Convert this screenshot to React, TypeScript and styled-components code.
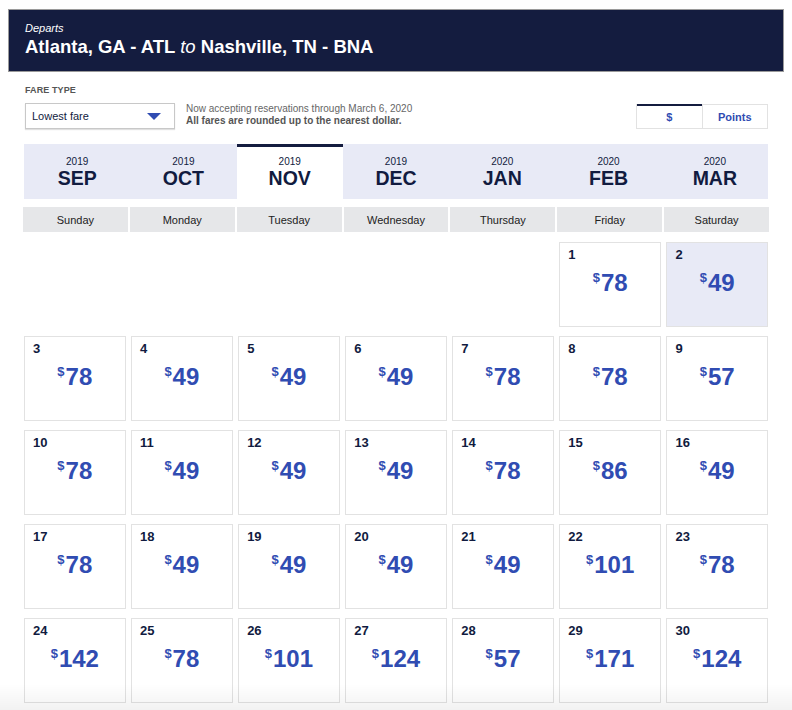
import React from "react";
import styled, { createGlobalStyle } from "styled-components";

const GlobalStyle = createGlobalStyle`
    body {
        margin: 8px;
        background: #fff;
        font-family: "Liberation Sans", Arial, sans-serif;
        color: #111b40;
    }
    body::after {
        content: "";
        position: fixed;
        left: 0;
        right: 0;
        bottom: 0;
        height: 26px;
        background: linear-gradient(rgba(0, 0, 0, 0), rgba(0, 0, 0, 0.05));
        pointer-events: none;
    }
`;

const Page = styled.div`
    width: 776px;
`;

const Header = styled.div`
    background: #141c3f;
    border: 1px solid #9a9a9a;
    height: 63px;
    padding: 12px 16px 0;
    box-sizing: border-box;
    color: #fff;
    margin-top: 1px;
`;

const Departs = styled.div`
    font-size: 11px;
    font-style: italic;
    line-height: 13px;
`;

const Route = styled.div`
    font-size: 18.5px;
    font-weight: 700;
    line-height: 23px;
    em {
        font-weight: 400;
    }
`;

const Body = styled.div`
    padding: 0 16px;
`;

const Controls = styled.div`
    display: flex;
    align-items: flex-end;
    padding-top: 14px;
    height: 57px;
    box-sizing: border-box;
`;

const FareBlock = styled.div`
    display: flex;
    flex-direction: column;
    padding-left: 1px;
`;

const FareLabel = styled.div`
    font-size: 9px;
    font-weight: 700;
    color: #555;
    letter-spacing: 0.1px;
    line-height: 11px;
    margin-bottom: 7px;
`;

const Select = styled.div`
    width: 150px;
    height: 26px;
    box-sizing: border-box;
    border: 1px solid #c8c8c8;
    box-shadow: 0 1px 1px rgba(0, 0, 0, 0.12);
    display: flex;
    align-items: center;
    justify-content: space-between;
    padding: 0 13px 0 6px;
    font-size: 11px;
    color: #111b40;
`;

const Caret = styled.span`
    width: 0;
    height: 0;
    border-left: 7px solid transparent;
    border-right: 7px solid transparent;
    border-top: 7px solid #304cb2;
`;

const Notes = styled.div`
    margin-left: 11px;
    font-size: 10px;
    color: #666;
    line-height: 12px;
    margin-bottom: 2px;
    b {
        color: #555;
    }
`;

const Toggle = styled.div`
    margin-left: auto;
    display: flex;
    width: 132px;
    height: 25px;
    border: 1px solid #e2e2e2;
    box-sizing: border-box;
`;

const ToggleItem = styled.div<{ $active?: boolean }>`
    flex: 1;
    display: flex;
    align-items: center;
    justify-content: center;
    font-size: 11px;
    font-weight: 700;
    color: #304cb2;
    border-top: ${(p) => (p.$active ? "2px solid #141c3f" : "none")};
    margin-top: ${(p) => (p.$active ? "-1px" : "0")};
    & + & {
        border-left: 1px solid #e2e2e2;
    }
`;

const Months = styled.div`
    display: grid;
    grid-template-columns: repeat(7, 1fr);
    margin-top: 15px;
    background: #e8eaf6;
    height: 55px;
`;

const MonthTab = styled.div<{ $active?: boolean }>`
    display: flex;
    flex-direction: column;
    align-items: center;
    justify-content: center;
    background: ${(p) => (p.$active ? "#fff" : "transparent")};
    border-top: ${(p) => (p.$active ? "3px solid #141c3f" : "3px solid transparent")};
    padding-bottom: 1px;
    box-sizing: border-box;
`;

const Year = styled.div`
    font-size: 10px;
    line-height: 12px;
    color: #111b40;
`;

const MonthName = styled.div`
    font-size: 19.5px;
    font-weight: 700;
    line-height: 21px;
    color: #111b40;
`;

const DayHeads = styled.div`
    display: grid;
    grid-template-columns: repeat(7, 1fr);
    gap: 2px;
    margin: 8px -1px 0;
`;

const DayHead = styled.div`
    height: 25px;
    background: #e6e7e9;
    display: flex;
    align-items: center;
    justify-content: center;
    font-size: 11px;
    color: #222;
`;

const Grid = styled.div`
    display: grid;
    grid-template-columns: repeat(7, 1fr);
    column-gap: 5.5px;
    row-gap: 9px;
    margin-top: 10px;
`;

const Cell = styled.div<{ $highlight?: boolean }>`
    height: 85px;
    box-sizing: border-box;
    border: 1px solid #e2e2e2;
    background: ${(p) => (p.$highlight ? "#e8eaf6" : "#fff")};
    padding: 5px 0 0 8px;
    display: flex;
    flex-direction: column;
`;

const DayNum = styled.div`
    font-size: 13px;
    font-weight: 700;
    color: #111b40;
    line-height: 14px;
`;

const Price = styled.div`
    align-self: center;
    margin-left: -8px;
    margin-top: 7px;
    font-size: 24px;
    font-weight: 700;
    color: #304cb2;
    line-height: 28px;
    sup {
        font-size: 13px;
        vertical-align: top;
        line-height: 18px;
        margin-right: 1px;
    }
`;

const months = [
    { y: "2019", m: "SEP" },
    { y: "2019", m: "OCT" },
    { y: "2019", m: "NOV", active: true },
    { y: "2019", m: "DEC" },
    { y: "2020", m: "JAN" },
    { y: "2020", m: "FEB" },
    { y: "2020", m: "MAR" },
];

const days = ["Sunday", "Monday", "Tuesday", "Wednesday", "Thursday", "Friday", "Saturday"];

const fares = [
    78, 49, 78, 49, 49, 49, 78, 78, 57, 78, 49, 49, 49, 78, 86, 49, 78, 49, 49, 49, 49, 101, 78,
    142, 78, 101, 124, 57, 171, 124,
];

const App: React.FC = () => {
    return (
        <Page>
            <GlobalStyle />
            <Header>
                <Departs>Departs</Departs>
                <Route>
                    Atlanta, GA - ATL <em>to</em> Nashville, TN - BNA
                </Route>
            </Header>
            <Body>
                <Controls>
                    <FareBlock>
                        <FareLabel>FARE TYPE</FareLabel>
                        <Select>
                            Lowest fare
                            <Caret />
                        </Select>
                    </FareBlock>
                    <Notes>
                        Now accepting reservations through March 6, 2020
                        <br />
                        <b>All fares are rounded up to the nearest dollar.</b>
                    </Notes>
                    <Toggle>
                        <ToggleItem $active>$</ToggleItem>
                        <ToggleItem>Points</ToggleItem>
                    </Toggle>
                </Controls>
                <Months>
                    {months.map((mo) => (
                        <MonthTab key={mo.m} $active={mo.active}>
                            <Year>{mo.y}</Year>
                            <MonthName>{mo.m}</MonthName>
                        </MonthTab>
                    ))}
                </Months>
                <DayHeads>
                    {days.map((d) => (
                        <DayHead key={d}>{d}</DayHead>
                    ))}
                </DayHeads>
                <Grid>
                    {Array.from({ length: 5 }).map((_, i) => (
                        <div key={"e" + i} />
                    ))}
                    {fares.map((f, i) => (
                        <Cell key={i} $highlight={i === 1}>
                            <DayNum>{i + 1}</DayNum>
                            <Price>
                                <sup>$</sup>
                                {f}
                            </Price>
                        </Cell>
                    ))}
                </Grid>
            </Body>
        </Page>
    );
};

export default App;
